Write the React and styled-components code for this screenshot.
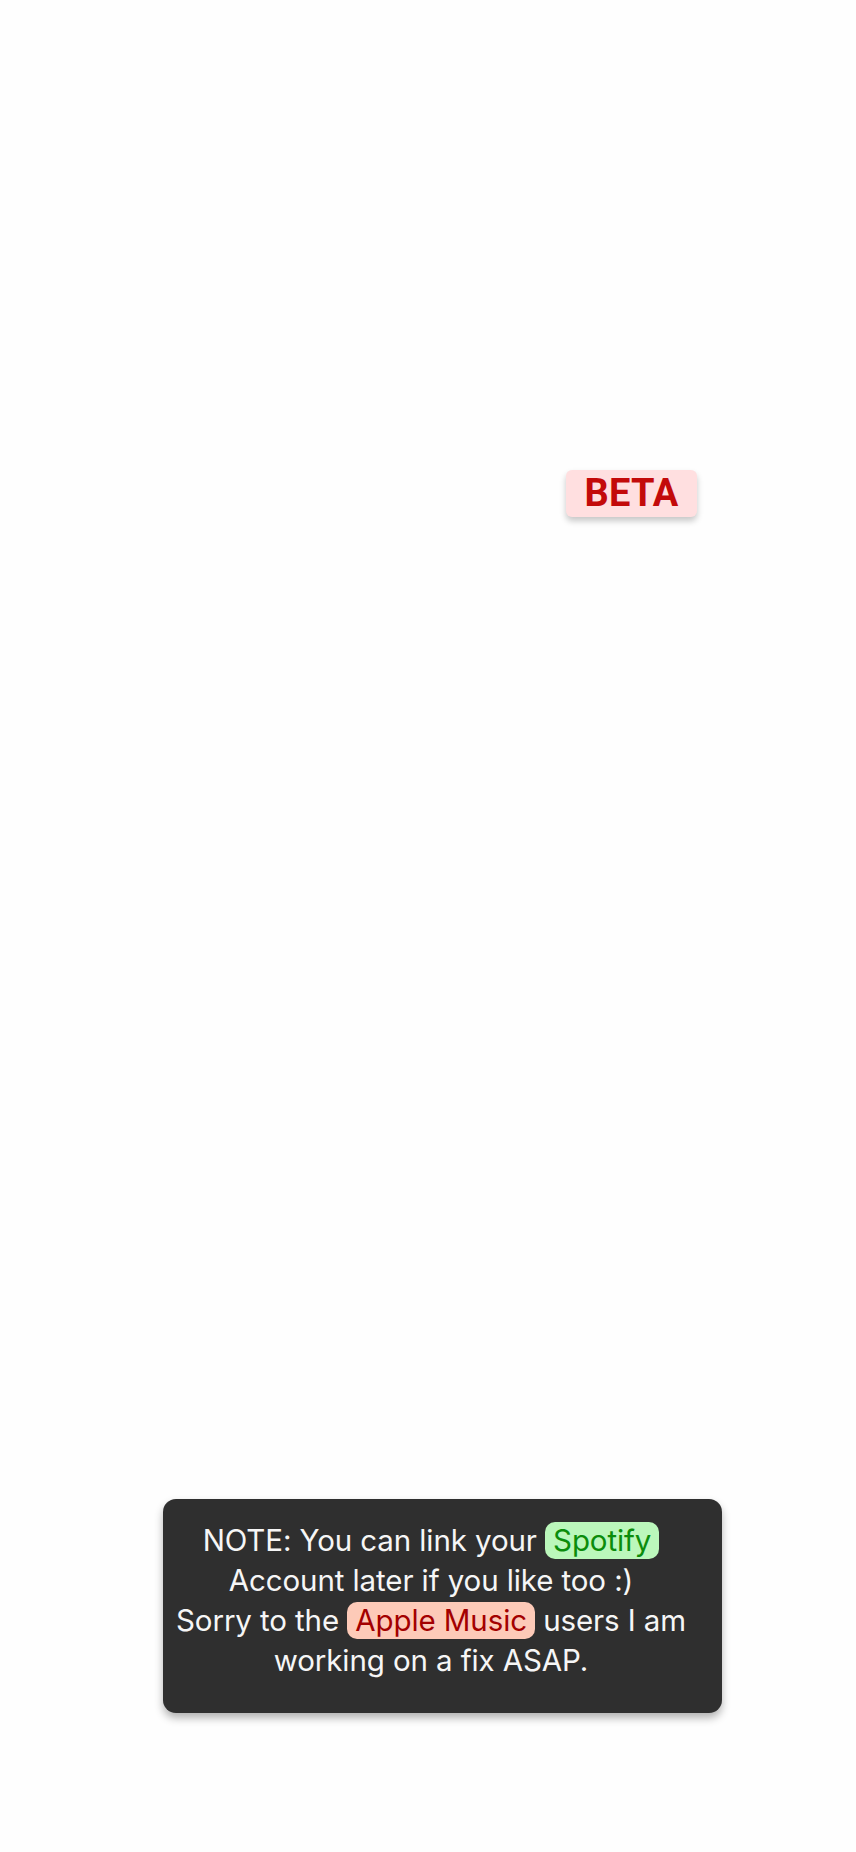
import React from "react";
import styled, { createGlobalStyle } from "styled-components";

const Global = createGlobalStyle`
  html, body { margin: 0; padding: 0; background: #fefefe; }
  * { box-sizing: border-box; }
`;

const Page = styled.div`
  min-height: 1852px;
  display: flex;
  flex-direction: column;
  background: #fefefe;
`;

const BadgeRow = styled.div`
  display: flex;
  padding: 470px 0 0 566px;
`;

const Badge = styled.div`
  height: 47px;
  width: 131px;
  display: flex;
  align-items: center;
  justify-content: center;
  padding-bottom: 2px;
  background: #ffdfe0;
  color: #c30a0a;
  font-family: Roboto, "Liberation Sans", sans-serif;
  font-weight: 700;
  font-size: 38px;
  letter-spacing: 0.2px;
  border-radius: 6px;
  box-shadow: 0 4px 6px rgba(0, 0, 0, 0.22);
`;

const NoteRow = styled.div`
  display: flex;
  padding: 982px 0 0 163px;
`;

const Note = styled.div`
  width: 559px;
  height: 214px;
  background: #2f2f2f;
  border-radius: 13px;
  box-shadow: 0 5px 8px rgba(0, 0, 0, 0.3);
  color: #f6f6f6;
  font-family: Inter, "Open Sans", sans-serif;
  font-weight: 400;
  font-size: 29.5px;
  line-height: 40px;
  text-align: center;
  padding: 21px 23px 0 0;
  letter-spacing: -0.1px;
`;

const Line = styled.div`
  white-space: nowrap;
`;

const Pill = styled.span`
  display: inline-block;
  padding: 0 8px;
  line-height: 37px;
  border-radius: 10px;
  background: ${(p) => p.$bg};
  color: ${(p) => p.$fg};
`;

export default function App() {
  return (
    <Page>
      <Global />
      <BadgeRow>
        <Badge>BETA</Badge>
      </BadgeRow>
      <NoteRow>
        <Note>
          <Line>
            NOTE: You can link your{" "}
            <Pill $bg="#bbf7bb" $fg="#0b8c0b">Spotify</Pill>
          </Line>
          <Line>Account later if you like too :)</Line>
          <Line>
            Sorry to the{" "}
            <Pill $bg="#fdcab8" $fg="#a30000">Apple Music</Pill> users I am
          </Line>
          <Line>working on a fix ASAP.</Line>
        </Note>
      </NoteRow>
    </Page>
  );
}
